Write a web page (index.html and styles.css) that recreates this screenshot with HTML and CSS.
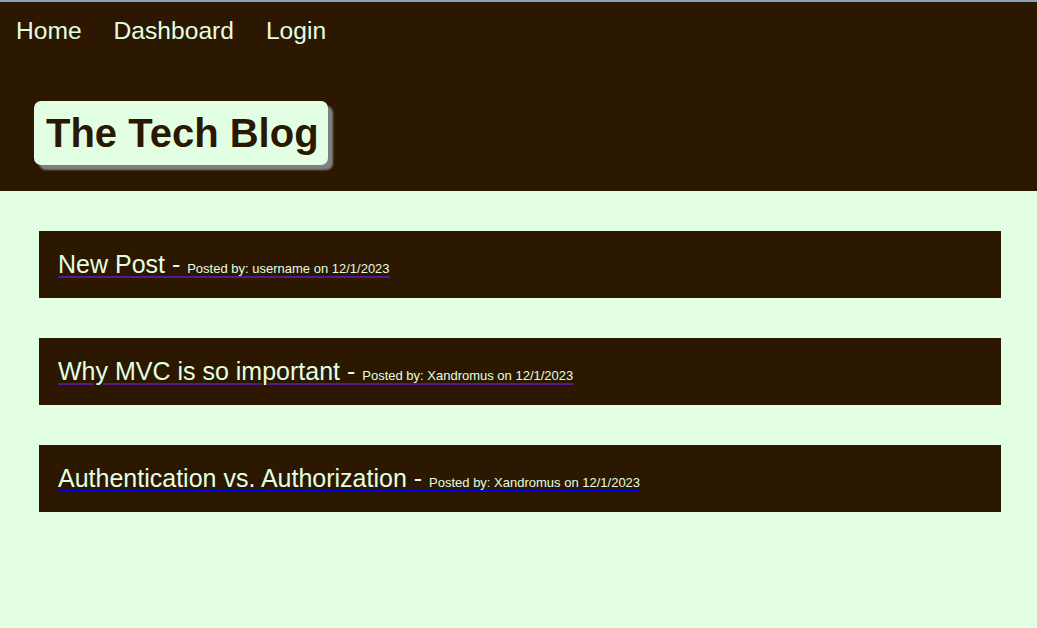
FILE: index.html
```html
<!DOCTYPE html>
<html lang="en">
<head>
<meta charset="utf-8">
<title>The Tech Blog</title>
<link rel="stylesheet" href="styles.css">
</head>
<body>
<header class="site-header">
  <nav class="nav">
    <a class="nav-link" href="#">Home</a>
    <a class="nav-link" href="#">Dashboard</a>
    <a class="nav-link" href="#">Login</a>
  </nav>
  <div class="brand-wrap">
    <h1 class="brand">The Tech Blog</h1>
  </div>
</header>
<main class="posts">
  <article class="post">
    <a class="post-link visited" href="#"><span class="post-title">New Post - </span><span class="post-meta">Posted by: username on 12/1/2023</span></a>
  </article>
  <article class="post">
    <a class="post-link visited" href="#"><span class="post-title">Why MVC is so important - </span><span class="post-meta">Posted by: Xandromus on 12/1/2023</span></a>
  </article>
  <article class="post">
    <a class="post-link unvisited" href="#"><span class="post-title">Authentication vs. Authorization - </span><span class="post-meta">Posted by: Xandromus on 12/1/2023</span></a>
  </article>
</main>
</body>
</html>
```
FILE: styles.css
```css
html, body {
  margin: 0;
  padding: 0;
}
body {
  background: #e3ffe3;
  font-family: "Liberation Sans", Arial, sans-serif;
  min-height: 628px;
}
.site-header {
  background: #2c1800;
  border-top: 2px solid #8da2b8;
  padding: 15px 0 26px 0;
}
.nav {
  display: flex;
  gap: 32px;
  padding-left: 16px;
}
.nav-link {
  color: #e3ffe3;
  text-decoration: none;
  font-size: 24.6px;
}
.brand-wrap {
  display: flex;
  padding: 56px 0 0 34px;
}
.brand {
  margin: 0;
  background: #e3ffe3;
  color: #2c1800;
  font-size: 40px;
  font-weight: bold;
  line-height: 64px;
  padding: 0 9px 0 12px;
  border-radius: 7px;
  box-shadow: 5px 5px 2px #808080;
}
.posts {
  display: flex;
  flex-direction: column;
  gap: 40px;
  padding: 40px 36px 40px 39px;
}
.post {
  background: #2c1800;
  height: 67px;
  box-sizing: border-box;
  padding: 19px 19px 0 19px;
}
.post-link {
  text-decoration-thickness: 2px;
  text-underline-offset: 3px;
}
.post-link.visited {
  color: #551a8b;
}
.post-link.unvisited {
  color: #0000ee;
}
.post-title {
  color: #e3ffe3;
  font-size: 25px;
}
.post-meta {
  color: #e3ffe3;
  font-size: 13px;
}
```
